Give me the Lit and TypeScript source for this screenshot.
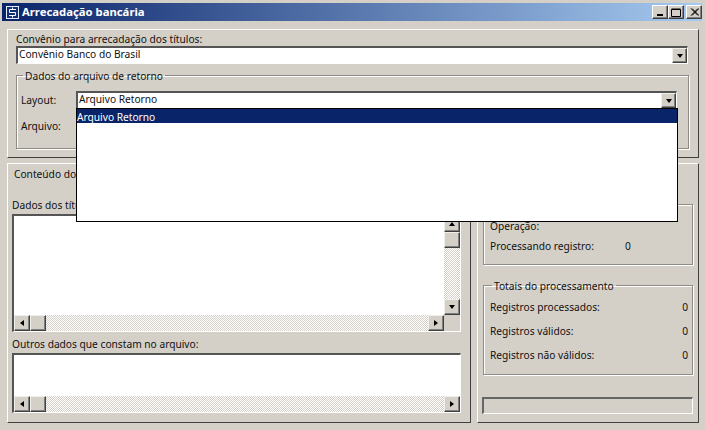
import { LitElement, html, css } from "lit";
import { customElement } from "lit/decorators.js";

const hscroll = (corner: boolean) => html`<div class="hbar">
  <div class="sbtn"><span class="tri t-left"></span></div>
  <div class="sbtn"></div>
  <div class="track"></div>
  <div class="sbtn"><span class="tri t-right"></span></div>
  ${corner ? html`<div class="corner"></div>` : ""}
</div>`;

@customElement("app-root")
export class AppRoot extends LitElement {
  static styles = css`
    :host {
      display: block;
      width: 705px;
      height: 430px;
      background: #d4d0c8;
      font-family: "Noto Sans", sans-serif;
      font-size: 10.2px;
      color: #111;
      overflow: hidden;
      position: relative;
    }
    * { box-sizing: border-box; }
    .win { display: flex; flex-direction: column; height: 430px; padding: 3px 3px 0 2px; }
    .title {
      height: 18px; display: flex; align-items: center; padding: 0 0 0 4px; gap: 3px; flex: none;
      background: linear-gradient(90deg, #0a246a, #a6caf0);
      color: #fff; font-weight: bold; font-size: 11.3px;
    }
    .appicon { width: 13px; height: 13px; flex: none; }
    .tname { flex: 1; line-height: 14px; margin-bottom: 1px; }
    .wbtns { display: flex; flex: none; }
    .wbtn {
      width: 16px; height: 14px; background: #d4d0c8; flex: none;
      border: 1px solid; border-color: #fff #404040 #404040 #fff;
      box-shadow: inset -1px -1px 0 #808080;
      display: flex; align-items: center; justify-content: center;
    }
    .wbtn.close { margin-left: 2px; }
    .wbtn svg { display: block; }
    .body { flex: 1; display: flex; flex-direction: column; padding: 8px 3px 7px 5px; gap: 5px; min-height: 0; }
    .panel { border: 1px solid; border-color: #fff #404040 #404040 #fff; }
    .top { height: 129px; flex: none; padding: 3px 9px 0 8px; }
    .lbl { line-height: 13px; height: 13px; white-space: nowrap; }
    .combo {
      height: 18px; background: #fff; display: flex; align-items: center;
      border-top: 2px solid #555; border-left: 2px solid #555;
      border-bottom: 1px solid #fff; border-right: 1px solid #fff;
      padding-left: 1px;
    }
    .combo span.v { line-height: 13px; margin-bottom: 3px; }
    .combo.first { margin-right: 1px; }
    .cbtn {
      margin-left: auto; width: 15px; height: 15px; background: #d4d0c8; flex: none;
      border: 1px solid; border-color: #f0eee8 #404040 #404040 #f0eee8;
      box-shadow: inset -1px -1px 0 #808080;
      display: flex; align-items: center; justify-content: center;
    }
    .tri { display: block; width: 0; height: 0; border-style: solid; border-color: transparent; }
    .t-down { border-width: 4px 3.5px 0 3.5px; border-top-color: #000; }
    .t-up { border-width: 0 3.5px 4px 3.5px; border-bottom-color: #000; }
    .t-left { border-width: 3.5px 4px 3.5px 0; border-right-color: #000; }
    .t-right { border-width: 3.5px 0 3.5px 4px; border-left-color: #000; }
    fieldset {
      margin: 0; min-width: 0; border: 1px solid #8f8c85; box-shadow: 1px 1px 0 #fff, inset 1px 1px 0 #fff;
      padding: 0;
    }
    legend { padding: 2px 2px 0 2px; margin-left: 2px; line-height: 12px; white-space: nowrap; }
    .dados { margin-top: 4px; height: 81px; padding: 9px 11px 0 4px; display: flex; flex-direction: column; gap: 8px; }
    .row { display: flex; align-items: center; height: 18px; }
    .row .k { width: 55px; flex: none; }
    .row .combo { flex: 1; }
    .bottom { flex: 1; display: flex; gap: 6px; min-height: 0; }
    .pleft { width: 464px; flex: none; padding: 4px 9px 0 4px; display: flex; flex-direction: column; }
    .ptitle { line-height: 13px; margin-left: 2px; }
    .sub { line-height: 13px; margin-top: 18px; }
    .sub2 { line-height: 13px; margin-top: 6px; }
    .memo {
      background: #fff; display: flex; flex-direction: column; flex: none;
      border-top: 2px solid #555; border-left: 2px solid #555;
      border-bottom: 1px solid #fff; border-right: 1px solid #fff;
    }
    .m1 { height: 118px; margin-top: 2px; }
    .m2 { height: 60px; margin-top: 2px; }
    .mbody { flex: 1; display: flex; min-height: 0; }
    .mfill { flex: 1; }
    .vbar { width: 16px; display: flex; flex-direction: column; flex: none; }
    .hbar { height: 16px; display: flex; flex: none; }
    .corner { width: 16px; flex: none; background: #d4d0c8; }
    .sbtn {
      width: 16px; height: 16px; background: #d4d0c8; flex: none;
      border: 1px solid; border-color: #f0eee8 #404040 #404040 #f0eee8;
      box-shadow: inset -1px -1px 0 #808080;
      display: flex; align-items: center; justify-content: center;
    }
    .track {
      flex: 1; background-color: #fff;
      background-image: conic-gradient(#d4d0c8 25%, #fff 0 50%, #d4d0c8 0 75%, #fff 0);
      background-size: 2px 2px;
    }
    .pright { flex: 1; padding: 40px 5px 0 4px; display: flex; flex-direction: column; min-width: 0; }
    .g1 { height: 61px; margin-left: 1px; padding: 15px 4px 0 6px; flex: none; }
    .g2 { height: 97px; margin: 13px 0 0 1px; padding: 9px 4px 0 6px; flex: none; display: flex; flex-direction: column; gap: 11px; }
    .line { line-height: 13px; white-space: nowrap; }
    .kv { display: flex; justify-content: space-between; line-height: 13px; white-space: nowrap; }
    .proc { display: flex; line-height: 13px; margin-top: 7px; white-space: nowrap; }
    .proc .k { width: 135px; flex: none; }
    .progress {
      height: 17px; margin-top: 22px; flex: none;
      border-top: 2px solid #666; border-left: 2px solid #666;
      border-bottom: 1px solid #fff; border-right: 1px solid #fff;
    }
    .drop {
      position: absolute; left: 76px; top: 108px; width: 602px; height: 114px;
      background: #fff; border: 1px solid #000;
    }
    .opt { background: #0a246a; color: #fff; height: 14px; line-height: 12px; padding-top: 2px; white-space: nowrap; }
  `;

  render() {
    return html`<div class="win">
      <div class="title">
        <svg class="appicon" viewBox="0 0 13 13">
          <rect x="0.5" y="0.5" width="12" height="12" fill="#12307a" stroke="#e6ecf6"/>
          <path d="M10 3.5H3.5V6.5H9.5V9.5H3M6.5 1.5V3M6.5 10V11.5" stroke="#fff" fill="none"/>
        </svg>
        <span class="tname">Arrecadação bancária</span>
        <div class="wbtns">
          <div class="wbtn"><svg width="8" height="8"><rect x="1" y="6" width="6" height="2" fill="#000"/></svg></div>
          <div class="wbtn"><svg width="10" height="9"><path d="M0.5 1.5H9.5V8.5H0.5Z M0.5 1H9.5" fill="none" stroke="#000"/></svg></div>
          <div class="wbtn close"><svg width="9" height="8"><path d="M1 0.5L8 7.5M2 0.5L9 7.5M8 0.5L1 7.5M9 0.5L2 7.5" stroke="#000"/></svg></div>
        </div>
      </div>
      <div class="body">
        <div class="panel top">
          <div class="lbl">Convênio para arrecadação dos títulos:</div>
          <div class="combo first"><span class="v">Convênio Banco do Brasil</span><div class="cbtn"><span class="tri t-down"></span></div></div>
          <fieldset class="dados">
            <legend>Dados do arquivo de retorno</legend>
            <div class="row"><span class="k">Layout:</span>
              <div class="combo"><span class="v">Arquivo Retorno</span><div class="cbtn"><span class="tri t-down"></span></div></div></div>
            <div class="row"><span class="k">Arquivo:</span><div class="combo"></div></div>
          </fieldset>
        </div>
        <div class="bottom">
          <div class="panel pleft">
            <div class="ptitle">Conteúdo do arquivo</div>
            <div class="sub">Dados dos títulos:</div>
            <div class="memo m1">
              <div class="mbody"><div class="mfill"></div>
                <div class="vbar">
                  <div class="sbtn"><span class="tri t-up"></span></div>
                  <div class="sbtn"></div>
                  <div class="track"></div>
                  <div class="sbtn"><span class="tri t-down"></span></div>
                </div>
              </div>
              ${hscroll(true)}
            </div>
            <div class="sub2">Outros dados que constam no arquivo:</div>
            <div class="memo m2"><div class="mbody"></div>${hscroll(false)}</div>
          </div>
          <div class="panel pright">
            <fieldset class="g1">
              <div class="line">Operação:</div>
              <div class="proc"><span class="k">Processando registro:</span><span>0</span></div>
            </fieldset>
            <fieldset class="g2">
              <legend>Totais do processamento</legend>
              <div class="kv"><span>Registros processados:</span><span>0</span></div>
              <div class="kv"><span>Registros válidos:</span><span>0</span></div>
              <div class="kv"><span>Registros não válidos:</span><span>0</span></div>
            </fieldset>
            <div class="progress"></div>
          </div>
        </div>
      </div>
      <div class="drop"><div class="opt">Arquivo Retorno</div></div>
    </div>`;
  }
}
